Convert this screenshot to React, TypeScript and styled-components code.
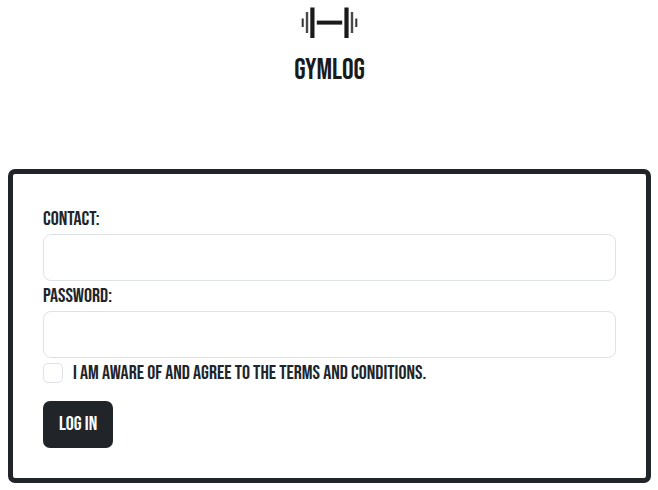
import React from "react";
import styled, { createGlobalStyle } from "styled-components";

const GlobalStyle = createGlobalStyle`
  * { box-sizing: border-box; }
  body {
    margin: 0;
    background: #fff;
    color: #212529;
    font: 20px/30px "Bebas Neue", "Oswald", sans-serif;
    text-transform: uppercase;
  }
`;

const Page = styled.main`
  padding: 7px 7px 7px 8px;
`;

const Brand = styled.header`
  display: flex;
  flex-direction: column;
  align-items: center;
  margin-bottom: 80px;
  color: #1a1a1a;
`;

const BrandMark = styled.svg`
  display: block;
  width: 59px;
  height: 32px;
`;

const BrandName = styled.h1`
  margin: 14px 0 0;
  font-size: 29px;
  font-weight: 400;
  line-height: 36px;
`;

const Card = styled.form`
  display: flex;
  flex-direction: column;
  padding: 30px;
  border: 5px solid #212529;
  border-radius: 7px;
`;

const Label = styled.label`
  font-weight: 400;
`;

const TextBox = styled.input`
  width: 100%;
  height: 47px;
  padding: 8px 14px;
  border: 1px solid #dee2e6;
  border-radius: 8px;
  background: #fff;
  color: inherit;
  font: inherit;
`;

const CheckRow = styled.div`
  display: flex;
  align-items: center;
  gap: 10px;
  margin-bottom: 13px;
`;

const CheckBox = styled.input`
  appearance: none;
  flex: none;
  width: 20px;
  height: 20px;
  margin: 0;
  border: 1px solid #dee2e6;
  border-radius: 5px;
  background: #fff;

  &:checked {
    background: #212529;
    border-color: #212529;
  }
`;

const SubmitButton = styled.button`
  align-self: flex-start;
  height: 47px;
  padding: 0 16px 2px;
  border: 0;
  border-radius: 7px;
  background: #212529;
  color: #fff;
  font: inherit;
  text-transform: inherit;
`;

export default function App() {
  return (
    <>
      <GlobalStyle />
      <Page>
        <Brand>
          <BrandMark viewBox="0 0 59 32" fill="#1a1a1a" aria-hidden="true">
            <rect x="1.7" y="11.5" width="2" height="8.5" fill="#333" />
            <rect x="5.8" y="5" width="2.4" height="21" fill="#484848" />
            <rect x="10.3" y="0.5" width="4.2" height="30.5" />
            <rect x="16.8" y="13.6" width="25.4" height="4" />
            <rect x="44.4" y="0.5" width="4.2" height="30.5" />
            <rect x="50.8" y="5" width="2.4" height="21" fill="#484848" />
            <rect x="55.3" y="11.5" width="2" height="8.5" fill="#333" />
          </BrandMark>
          <BrandName>Gymlog</BrandName>
        </Brand>
        <Card onSubmit={(event) => event.preventDefault()}>
          <Label htmlFor="contact">Contact:</Label>
          <TextBox id="contact" type="text" />
          <Label htmlFor="password">Password:</Label>
          <TextBox id="password" type="password" />
          <CheckRow>
            <CheckBox id="terms" type="checkbox" />
            <Label htmlFor="terms">I am aware of and agree to the terms and conditions.</Label>
          </CheckRow>
          <SubmitButton type="submit">Log in</SubmitButton>
        </Card>
      </Page>
    </>
  );
}
